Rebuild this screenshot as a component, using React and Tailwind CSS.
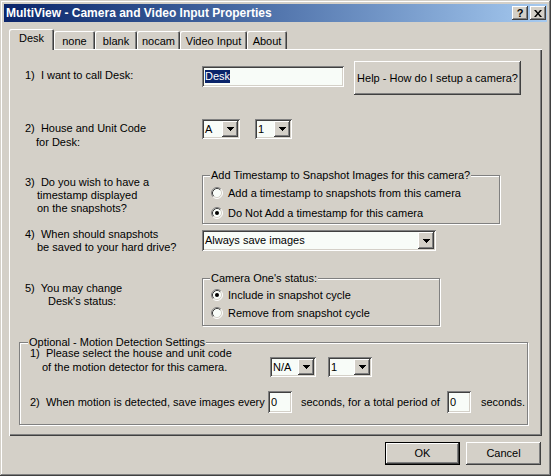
// MultiView camera properties dialog, Windows 2000 look
const raised = 'shadow-[inset_-1px_-1px_#404040,inset_1px_1px_#fff,inset_-2px_-2px_#808080]';
const sunken = 'shadow-[inset_1px_1px_#808080,inset_-1px_-1px_#fff,inset_2px_2px_#404040,inset_-2px_-2px_#D4D0C8]';
const etched = 'border border-[#808080] shadow-[inset_1px_1px_#fff,1px_1px_#fff]';

const TABS = [
  { label: 'Desk', w: 'w-[45px]', active: true },
  { label: 'none', w: 'w-[41px]' },
  { label: 'blank', w: 'w-[42px]' },
  { label: 'nocam', w: 'w-[43px]' },
  { label: 'Video Input', w: 'w-[67px]' },
  { label: 'About', w: 'w-[40px]' },
];

const Arrow = () => (
  <svg width="7" height="4" viewBox="0 0 7 4">
    <path d="M0 0h7v1H0zM1 1h5v1H1zM2 2h3v1H2zM3 3h1v1H3z" fill="#000" />
  </svg>
);

const Radio = ({ checked }) => (
  <svg width="12" height="12" viewBox="0 0 12 12" className="shrink-0">
    <circle cx="6" cy="6" r="5" fill="#F8FCF8" />
    <path d="M2.11 9.89A5.5 5.5 0 0 1 9.89 2.11" fill="none" stroke="#808080" />
    <path d="M9.89 2.11A5.5 5.5 0 0 1 2.11 9.89" fill="none" stroke="#fff" />
    <path d="M2.82 9.18A4.5 4.5 0 0 1 9.18 2.82" fill="none" stroke="#404040" />
    <path d="M9.18 2.82A4.5 4.5 0 0 1 2.82 9.18" fill="none" stroke="#D4D0C8" />
    {checked && <circle cx="6" cy="6" r="2" fill="#000" />}
  </svg>
);

const Combo = ({ value, className }) => (
  <div className={`flex p-[2px] bg-[#F8FCF8] ${sunken} ${className}`}>
    <span className="flex-1 flex items-center pl-[1px]">{value}</span>
    <span className={`w-[16px] flex items-center justify-center bg-[#D4D0C8] ${raised}`}>
      <Arrow />
    </span>
  </div>
);

const Edit = ({ children, className }) => (
  <div className={`flex items-center px-[3px] bg-[#F8FCF8] ${sunken} ${className}`}>{children}</div>
);

const Btn = ({ children, className }) => (
  <div className={`flex items-center justify-center bg-[#D4D0C8] ${raised} ${className}`}>{children}</div>
);

const RadioRow = ({ checked, label, h }) => (
  <div className={`flex items-center ${h} pl-[8px]`}>
    <Radio checked={checked} />
    <span className="ml-[5px]">{label}</span>
  </div>
);

export default function App() {
  return (
    <div className="w-[551px] h-[476px] p-[4px] flex flex-col bg-[#D4D0C8] text-black text-[11px] leading-[13px] font-['Liberation_Sans',Arial,sans-serif] shadow-[inset_-1px_-1px_#404040,inset_1px_1px_#D4D0C8,inset_-2px_-2px_#808080,inset_2px_2px_#fff] select-none">
      {/* caption */}
      <div className="h-[18px] flex items-center justify-between bg-linear-to-r from-[#0A246A] to-[#A6CAF0]">
        <span className="pl-[2px] text-white font-bold text-[12px]">MultiView - Camera and Video Input Properties</span>
        <div className="flex gap-[2px] pr-[1px]">
          <Btn className="w-[16px] h-[14px] font-bold text-[11px] leading-[11px]">?</Btn>
          <Btn className="w-[16px] h-[14px]">
            <svg width="8" height="7" viewBox="0 0 8 7">
              <path d="M0 0h2l2 2.5L6 0h2L5 3.5 8 7H6L4 4.5 2 7H0l3-3.5z" fill="#000" />
            </svg>
          </Btn>
        </div>
      </div>

      <div className="px-[5px] flex flex-col">
        {/* tabs */}
        <div className="mt-[7px] h-[20px] flex items-end">
          {TABS.map(t => (
            <div
              key={t.label}
              className={`${t.w} flex justify-center rounded-t-[2px] bg-[#D4D0C8] shadow-[inset_1px_1px_#fff,inset_-1px_0_#404040,inset_-2px_0_#808080] ${
                t.active ? 'h-[21px] mb-[-1px] pt-[3px] relative z-10' : 'h-[18px] pt-[4px]'
              }`}
            >
              {t.label}
            </div>
          ))}
        </div>

        {/* tab page */}
        <div className="h-[387px] flex flex-col shadow-[inset_1px_1px_#fff,inset_-1px_-1px_#404040,inset_-2px_-2px_#808080]">
          <div className="mt-[12px] pl-[16px] flex items-start">
            <div className="w-[177px] mt-[8px]">1)&nbsp; I want to call Desk:</div>
            <Edit className="mt-[5px] w-[142px] h-[21px]">
              <span className="bg-[#0A246A] text-white">Desk</span>
            </Edit>
            <Btn className="ml-[10px] w-[167px] h-[34px]">Help - How do I setup a camera?</Btn>
          </div>

          <div className="mt-[24px] pl-[16px] flex items-start">
            <div className="w-[177px] mt-[2px] leading-[14px]">
              <div>2)&nbsp; House and Unit Code</div>
              <div className="pl-[11px]">for Desk:</div>
            </div>
            <Combo value="A" className="w-[38px] h-[20px]" />
            <Combo value="1" className="ml-[15px] w-[37px] h-[20px]" />
          </div>

          <div className="mt-[20px] pl-[16px] flex items-start">
            <div className="w-[177px] mt-[7px]">
              <div>3)&nbsp; Do you wish to have a</div>
              <div className="pl-[12px]">timestamp displayed</div>
              <div className="pl-[12px]">on the snapshots?</div>
            </div>
            <fieldset className={`w-[298px] ${etched}`}>
              <legend className="ml-[7px] px-[1px] bg-[#D4D0C8]">Add Timestamp to Snapshot Images for this camera?</legend>
              <div className="mt-[1px]">
                <RadioRow label="Add a timestamp to snapshots from this camera" h="h-[20px]" />
                <RadioRow checked label="Do Not Add a timestamp for this camera" h="h-[20px]" />
              </div>
            </fieldset>
          </div>

          <div className="mt-[4px] pl-[16px] flex items-start">
            <div className="w-[177px]">
              <div>4)&nbsp; When should snapshots</div>
              <div className="pl-[12px]">be saved to your hard drive?</div>
            </div>
            <Combo value="Always save images" className="mt-[2px] w-[234px] h-[21px]" />
          </div>

          <div className="mt-[18px] pl-[16px] flex items-start">
            <div className="w-[177px] mt-[10px]">
              <div>5)&nbsp; You may change</div>
              <div className="pl-[23px]">Desk's status:</div>
            </div>
            <fieldset className={`w-[238px] pb-[3px] ${etched}`}>
              <legend className="ml-[7px] px-[1px] bg-[#D4D0C8]">Camera One's status:</legend>
              <div className="mt-[1px]">
                <RadioRow checked label="Include in snapshot cycle" h="h-[18px]" />
                <RadioRow label="Remove from snapshot cycle" h="h-[18px]" />
              </div>
            </fieldset>
          </div>

          <fieldset className={`mt-[10px] ml-[10px] w-[509px] pl-[10px] pb-[11px] ${etched}`}>
            <legend className="ml-[-2px] px-[1px] bg-[#D4D0C8]">Optional - Motion Detection Settings</legend>
            <div className="mt-[-3px] flex items-start">
              <div className="w-[240px] leading-[14px]">
                <div>1)&nbsp; Please select the house and unit code</div>
                <div className="pl-[12px]">of the motion detector for this camera.</div>
              </div>
              <Combo value="N/A" className="mt-[11px] w-[46px] h-[20px]" />
              <Combo value="1" className="mt-[11px] ml-[12px] w-[44px] h-[20px]" />
            </div>
            <div className="mt-[14px] flex items-center">
              <span className="w-[238px]">2)&nbsp; When motion is detected, save images every</span>
              <Edit className="w-[24px] h-[22px]">0</Edit>
              <span className="w-[155px] pl-[9px]">seconds, for a total period of</span>
              <Edit className="w-[24px] h-[22px]">0</Edit>
              <span className="pl-[10px]">seconds.</span>
            </div>
          </fieldset>
        </div>

        {/* dialog buttons */}
        <div className="mt-[6px] flex justify-end gap-[6px] pr-[1px]">
          <Btn className="w-[75px] h-[23px] border border-black">OK</Btn>
          <Btn className="w-[75px] h-[23px]">Cancel</Btn>
        </div>
      </div>
    </div>
  );
}
